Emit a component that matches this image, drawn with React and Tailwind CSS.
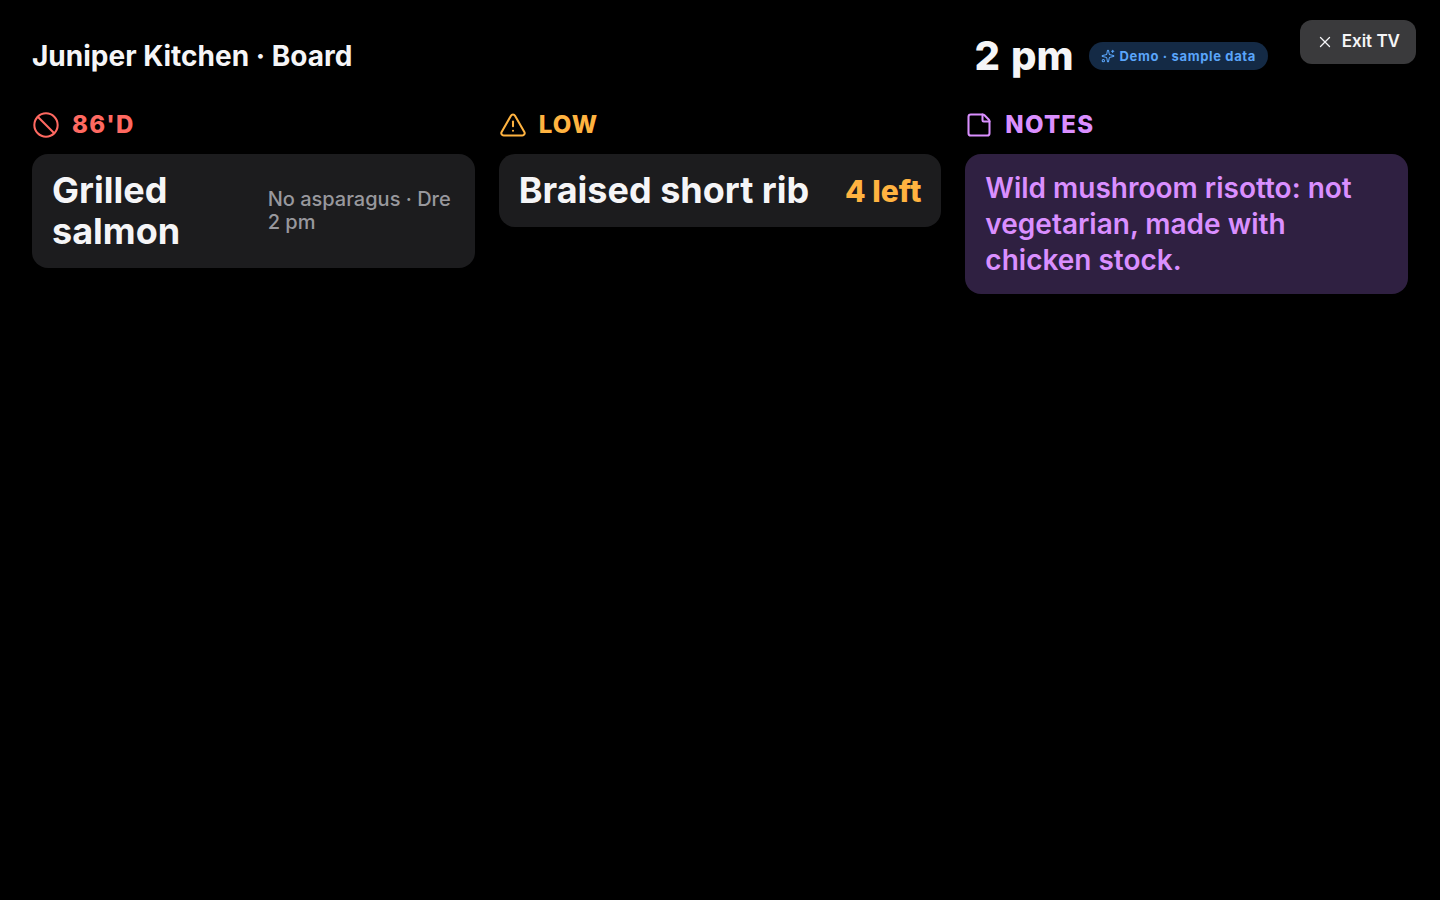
import { Ban, Sparkles, StickyNote, TriangleAlert, X } from "lucide-react";

const outOfStock = [{ name: "Grilled salmon", detail: "No asparagus · Dre 2 pm" }];
const runningLow = [{ name: "Braised short rib", left: 4 }];
const notes = ["Wild mushroom risotto: not vegetarian, made with chicken stock."];

const Column = ({ icon: Icon, title, color, children }) => (
    <section className="flex flex-1 basis-0 min-w-0 flex-col gap-3">
        <h2 className={`flex items-center gap-3 text-2xl leading-[34px] font-extrabold tracking-wider uppercase ${color}`}>
            <Icon size={28} strokeWidth={1.75} aria-hidden="true" />
            {title}
        </h2>
        <ul className="flex flex-col gap-3">{children}</ul>
    </section>
);

const App = () => {
    return (
        <main className="min-h-screen bg-black px-8 pt-8 pb-6 font-['Inter',sans-serif] text-[#f5f5f7]">
            {/* HEADER */}
            <header className="flex items-center justify-between pr-[140px]">
                <h1 className="text-[28px] leading-[34px] font-bold">Juniper Kitchen · Board</h1>
                <div className="flex items-center gap-4">
                    <span className="text-[40px] leading-[48px] font-extrabold tabular-nums">2 pm</span>
                    <span className="flex items-center gap-1 rounded-full bg-[#142a45] px-3 py-1 text-[13px] leading-5 font-bold tracking-wider text-[#5aa5fa]">
                        <Sparkles size={14} strokeWidth={1.75} aria-hidden="true" />
                        Demo · sample data
                    </span>
                </div>
            </header>

            {/* EXIT */}
            <button
                type="button"
                className="fixed top-5 right-6 flex h-11 items-center gap-2 rounded-xl bg-[#3a3a3c] px-4 text-[17px] font-semibold"
            >
                <X size={18} strokeWidth={1.75} aria-hidden="true" />
                Exit TV
            </button>

            {/* BOARD */}
            <div className="mt-7 flex gap-6">
                <Column icon={Ban} title="86'd" color="text-[#ff6961]">
                    {outOfStock.map((item) => (
                        <li key={item.name} className="flex items-center justify-between gap-4 rounded-2xl bg-[#1c1c1e] px-5 py-4">
                            <span className="text-4xl leading-[41px] font-bold">{item.name}</span>
                            <span className="text-xl leading-[23px] font-medium text-[#98989d]">{item.detail}</span>
                        </li>
                    ))}
                </Column>

                <Column icon={TriangleAlert} title="Low" color="text-[#ffb340]">
                    {runningLow.map((item) => (
                        <li key={item.name} className="flex items-center justify-between gap-4 rounded-2xl bg-[#1c1c1e] px-5 py-4">
                            <span className="text-4xl leading-[41px] font-bold">{item.name}</span>
                            <span className="text-3xl font-extrabold whitespace-nowrap text-[#ffb340]">{item.left} left</span>
                        </li>
                    ))}
                </Column>

                <Column icon={StickyNote} title="Notes" color="text-[#da8fff]">
                    {notes.map((note) => (
                        <li key={note} className="rounded-2xl bg-[#2f2041] px-5 py-4 text-[28px] leading-9 font-semibold text-[#da8fff]">
                            {note}
                        </li>
                    ))}
                </Column>
            </div>
        </main>
    );
};

export default App;
